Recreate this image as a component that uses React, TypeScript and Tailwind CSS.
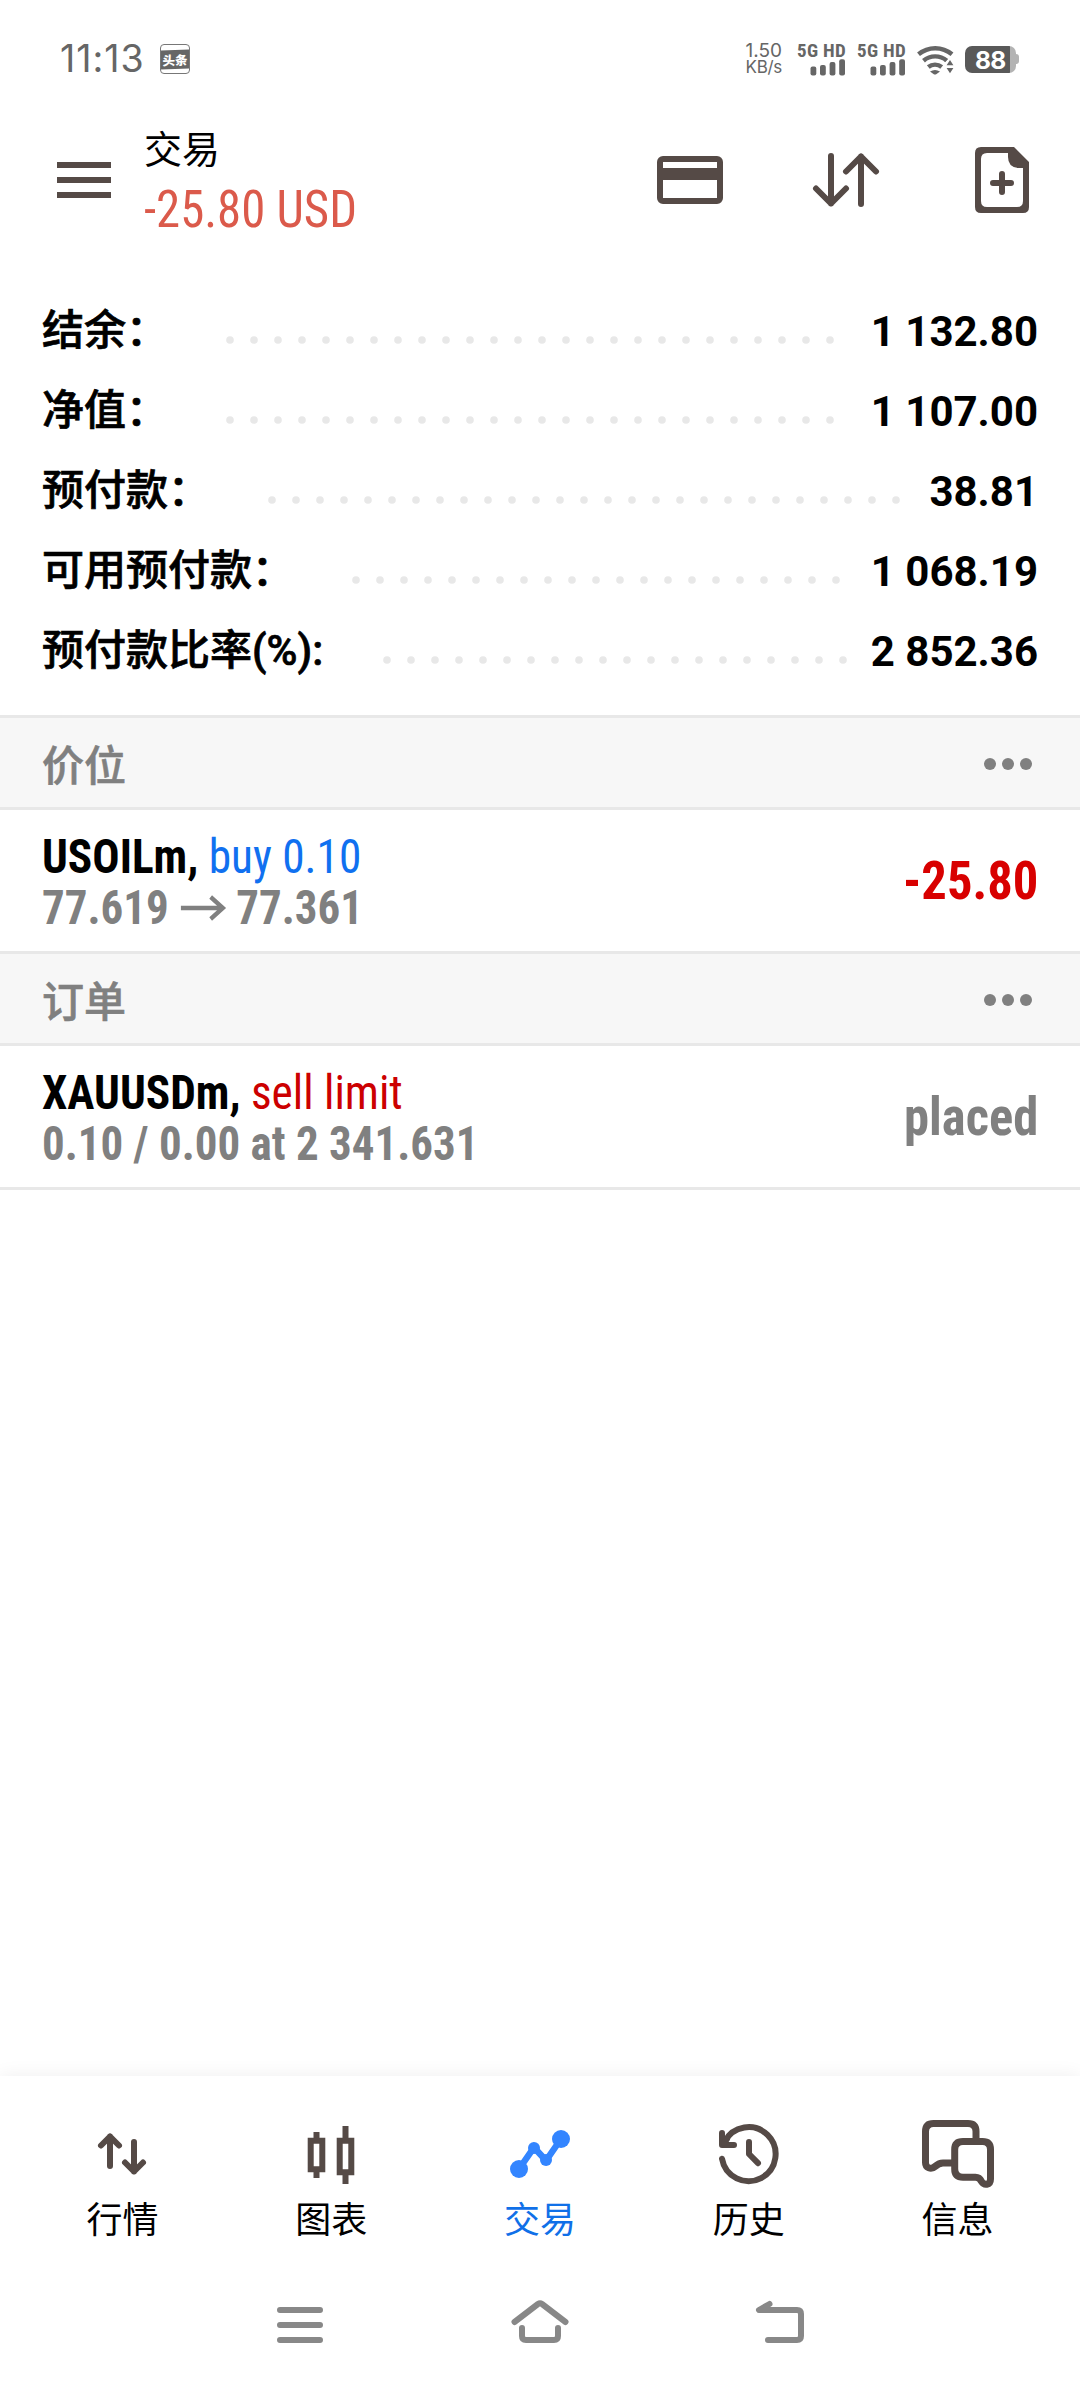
import type { ReactNode } from "react";

const BROWN = "#554a46";
const GRAY = "#666666";

type Account = { label: string; value: string; dots: number; gap: string };

const account: Account[] = [
  { label: "结余：", value: "1 132.80", dots: 26, gap: "ml-[58px]" },
  { label: "净值：", value: "1 107.00", dots: 26, gap: "ml-[58px]" },
  { label: "预付款：", value: "38.81", dots: 27, gap: "ml-[58px]" },
  { label: "可用预付款：", value: "1 068.19", dots: 21, gap: "ml-[58px]" },
  { label: "预付款比率(%):", value: "2 852.36", dots: 20, gap: "ml-[60px]" },
];

function Leader({ count }: { count: number }) {
  const width = (count - 1) * 24 + 8;
  return (
    <svg width={width} height={8} className="mt-[16px] shrink-0" fill="#e8e8e8">
      {Array.from({ length: count }, (_, i) => (
        <circle key={i} cx={4 + i * 24} cy={4} r={3.8} />
      ))}
    </svg>
  );
}

function Signal() {
  return (
    <div className="flex w-[50px] flex-col items-end">
      <span className="w-[50px] whitespace-nowrap font-[Roboto] text-[19px] leading-[16px] font-bold tracking-[0.3px] [font-stretch:75%]">5G HD</span>
      <svg width="36" height="17" viewBox="0 0 36 17" fill={GRAY} className="mr-[1px]">
        <rect x="0.5" y="7.5" width="5.8" height="9" rx="2" />
        <rect x="10" y="6" width="5.8" height="10.5" rx="2" />
        <rect x="19.6" y="3" width="5.8" height="13.5" rx="2" />
        <rect x="29.2" y="0.3" width="5.8" height="16.2" rx="2" />
      </svg>
    </div>
  );
}

function StatusBar() {
  return (
    <div className="flex h-[90px] items-center pt-[28px] pl-[60px] text-[#666666]">
      <span className="w-[86px] whitespace-nowrap font-[Inter] text-[37.5px] leading-[40px] tracking-[1px]">11:13</span>
      <div className="ml-[14px] flex h-[30px] w-[30px] flex-col justify-center overflow-hidden rounded-[4px] border border-[#777777]">
        <div className="-mx-[1px] flex h-[19px] -skew-y-2 items-center justify-center whitespace-nowrap bg-[#666666] font-['Noto_Sans_CJK_SC'] text-[12.5px] leading-[19px] font-black text-white">
          头条
        </div>
      </div>
      <div className="ml-[553px] flex w-[39px] flex-col items-end whitespace-nowrap font-[Inter]">
        <span className="text-[19px] leading-[17px]">1.50</span>
        <span className="text-[17px] leading-[17px] tracking-[-0.3px]">KB/s</span>
      </div>
      <div className="ml-[15px] flex gap-[10px]">
        <Signal />
        <Signal />
      </div>
      <svg width="40" height="32" viewBox="916 43 40 32" fill="none" stroke={GRAY} strokeWidth="4.4" className="ml-[8px]">
        <path d="M919.5 54.3 A26 26 0 0 1 953 54.3" />
        <path d="M924.5 60.700 A18 18 0 0 1 947.8 60.700" />
        <path d="M929.3 67 A10.5 10.5 0 0 1 942.7 67" />
        <path d="M931 71.500 Q936 68.400 941 71.500 L937.2 74.200 Q936 75 934.8 74.200 Z" fill={GRAY} stroke="none" />
        <path d="M951 57.5 L957 64 V75 H944.5 V64 Z" fill="#ffffff" stroke="none" />
        <path d="M951 60 L954.4 65.2 H947.6 Z M951 73.2 L954.4 68 H947.6 Z" fill={GRAY} stroke="none" />
      </svg>
      <div className="ml-[10px] flex items-center">
        <div className="h-[27px] w-[51px] rounded-[7px] bg-linear-to-r from-[#595959] from-[88%] to-[#b3b3b3] to-[88%] pl-[10px] font-[Inter] text-[24.5px] leading-[28px] font-bold tracking-[-0.8px] text-white">
          88
        </div>
        <div className="h-[10px] w-[3px] rounded-r-[3px] bg-[#b3b3b3]" />
      </div>
    </div>
  );
}

function Header() {
  return (
    <header className="flex h-[180px] items-center pl-[57px]">
      <div className="flex w-[54px] flex-col gap-[9px]">
        <div className="h-[6px] bg-[#554a46]" />
        <div className="h-[6px] bg-[#554a46]" />
        <div className="h-[6px] bg-[#554a46]" />
      </div>
      <div className="ml-[33px] flex w-[301px] flex-col items-start whitespace-nowrap pt-[6px]">
        <span className="text-[38px] leading-[54px] text-black">交易</span>
        <span className="origin-left scale-x-[.938] text-[52px] leading-[66px] text-[#db5a4b] [font-stretch:75%]">-25.80 USD</span>
      </div>
      <svg width="66" height="48" viewBox="0 0 66 48" className="ml-[212px]">
        <rect x="3" y="3" width="60" height="42" rx="3" fill="none" stroke={BROWN} strokeWidth="6" />
        <rect x="3" y="12" width="60" height="12" fill={BROWN} />
      </svg>
      <svg width="68" height="60" viewBox="812 150 68 60" fill="none" stroke={BROWN} strokeWidth="6" strokeLinecap="round" strokeLinejoin="round" className="ml-[89px]">
        <path d="M831 156 V203.5 M816 188.5 L831 203.5 L846 188.5" />
        <path d="M861 204 V156.5 M846 171.5 L861 156.5 L876 171.5" />
      </svg>
      <svg width="54" height="66" viewBox="0 0 54 66" className="ml-[95px]">
        <path fillRule="evenodd" fill={BROWN} d="M6 0 H39 L54 15 V60 Q54 66 48 66 H6 Q0 66 0 60 V6 Q0 0 6 0 Z M12 6 Q6 6 6 12 V54 Q6 60 12 60 H42 Q48 60 48 54 V21 H43 Q33 20 33 10 V6 Z" />
        <path d="M27 27 V45 M18 36 H36" stroke={BROWN} strokeWidth="6" strokeLinecap="round" />
      </svg>
    </header>
  );
}

function Section({ title, children }: { title: string; children: ReactNode }) {
  return (
    <section>
      <div className="flex h-[95px] items-center justify-between border-y-[3px] border-[#e8e8e8] bg-[#f7f7f7] pr-[48px] pl-[42px]">
        <h2 className="pt-[9px] text-[42px] leading-[50px] font-medium text-[#808080] [-webkit-text-stroke:0.6px]">{title}</h2>
        <div className="flex gap-[6px] pt-[3px]">
          <i className="h-[12px] w-[12px] rounded-full bg-[#808080]" />
          <i className="h-[12px] w-[12px] rounded-full bg-[#808080]" />
          <i className="h-[12px] w-[12px] rounded-full bg-[#808080]" />
        </div>
      </div>
      {children}
    </section>
  );
}

function Entry(props: { symbol: string; action: ReactNode; detail: ReactNode; result: ReactNode }) {
  return (
    <div className="flex h-[141px] justify-between pr-[42px] pl-[42px] whitespace-nowrap [font-stretch:75%]">
      <div className="flex flex-col items-start pt-[21px] text-[48px] leading-[51px]">
        <div className="origin-left scale-x-[.944]">
          <span className="font-bold text-black">{props.symbol},</span> {props.action}
        </div>
        <div className="flex origin-left scale-x-[.937] items-center font-bold text-[#808080]">{props.detail}</div>
      </div>
      <div className="origin-right scale-x-[.937] text-[54px] leading-[142px] font-bold">{props.result}</div>
    </div>
  );
}

function Tab({ label, active, children }: { label: string; active?: boolean; children: ReactNode }) {
  return (
    <div className="flex flex-col items-center">
      {children}
      <span className={active ? "text-[36px] leading-[54px] text-[#1070e8]" : "text-[36px] leading-[54px] text-black"}>{label}</span>
    </div>
  );
}

function TabBar() {
  return (
    <nav className="grid h-[174px] grid-cols-5 bg-white px-[18px] pt-[38px] shadow-[0_0_18px_rgba(0,0,0,0.07)]">
      <Tab label="行情">
        <svg width="80" height="80" viewBox="82 2114 80 80" fill="none" stroke={BROWN} strokeWidth="6" strokeLinecap="round" strokeLinejoin="round">
          <path d="M110 2166 V2136.5 M101 2145.5 L110 2136.5 L119 2145.5" />
          <path d="M134 2142 V2171.5 M125 2162.5 L134 2171.5 L143 2162.5" />
        </svg>
      </Tab>
      <Tab label="图表">
        <svg width="80" height="80" viewBox="291 2114 80 80" fill="none" stroke={BROWN} strokeWidth="6">
          <path d="M316.5 2132 V2141 M316.5 2169 V2178 M310.7 2140.8 H322.3 V2169.2 H310.7 Z" />
          <path d="M345.5 2126 V2141 M345.5 2172 V2184 M339.7 2140.8 H351.3 V2172.2 H339.7 Z" />
        </svg>
      </Tab>
      <Tab label="交易" active>
        <svg width="80" height="80" viewBox="500 2114 80 80" fill="#3385ff">
          <path d="M519 2169 L534 2147.5 L546 2160.5 L561 2139" fill="none" stroke="#3385ff" strokeWidth="6.5" />
          <circle cx="519" cy="2169" r="9" />
          <circle cx="534" cy="2148" r="6" />
          <circle cx="546" cy="2160" r="6" />
          <circle cx="561" cy="2139" r="9" />
        </svg>
      </Tab>
      <Tab label="历史">
        <svg width="80" height="80" viewBox="709 2114 80 80" fill="none" stroke={BROWN} strokeWidth="6" strokeLinecap="round" strokeLinejoin="round">
          <path d="M722 2158.8 A27 27 0 1 0 724.5 2142" />
          <path d="M722 2133 V2145 H734" />
          <path d="M724 2143 L727 2139" />
          <path d="M749 2142 V2154 L758 2163.2" />
        </svg>
      </Tab>
      <Tab label="信息">
        <svg width="80" height="80" viewBox="918 2114 80 80" fill="none" stroke={BROWN} strokeWidth="7">
          <path d="M976 2140 V2131.500 Q976 2123.500 968 2123.500 H933.500 Q925.500 2123.500 925.500 2131.500 V2162.500 C925.500 2168 931 2170 935 2166.500 Q939 2163 943 2163 H953" />
          <path d="M963 2141.500 H982.500 Q990.500 2141.500 990.500 2149.500 V2179 C990.500 2185.500 984 2185.500 981.500 2181.500 Q979.500 2177.200 975.500 2177.200 H963 Q954.700 2177.200 954.700 2169 V2149.500 Q954.700 2141.500 963 2141.500 Z" />
        </svg>
      </Tab>
    </nav>
  );
}

function SystemBar() {
  return (
    <div className="flex h-[138px] items-center justify-center gap-[180px] bg-white pt-[12px]">
      <svg width="60" height="60" viewBox="270 2295 60 60" stroke="#888888" strokeWidth="6" strokeLinecap="round">
        <path d="M280 2310 H320 M280 2325 H320 M280 2340 H320" />
      </svg>
      <svg width="60" height="60" viewBox="510 2295 60 60" fill="none" stroke="#888888" strokeWidth="6" strokeLinecap="round" strokeLinejoin="round">
        <path d="M514.500 2322 L538 2304 Q540 2302.600 542 2304 L565.500 2322" />
        <path d="M522 2328 V2336 Q522 2340 526 2340 H554 Q558 2340 558 2336 V2328" />
      </svg>
      <svg width="60" height="60" viewBox="750 2295 60 60" fill="none" stroke="#888888" strokeWidth="6" strokeLinecap="round" strokeLinejoin="round">
        <path d="M769.500 2304 L759 2310 H797 Q801 2310 801 2314 V2336 Q801 2340 797 2340 H768" />
      </svg>
    </div>
  );
}

export default function App() {
  return (
    <div className="flex h-[2388px] w-[1080px] flex-col overflow-hidden bg-white font-[Roboto,'Noto_Sans_CJK_SC',sans-serif]">
      <StatusBar />
      <Header />
      <main className="flex-1">
        <div className="pt-[22px] pr-[42px] pb-[23px] pl-[42px]">
          {account.map((row) => (
            <div key={row.label} className="flex h-[80px] items-center whitespace-nowrap text-[42px] leading-[80px] text-black">
              <span className="pb-[2px] font-medium [-webkit-text-stroke:0.7px]">{row.label}</span>
              <div className={`${row.gap} flex flex-1`}>
                <Leader count={row.dots} />
              </div>
              <span className="font-bold">{row.value}</span>
            </div>
          ))}
        </div>
        <Section title="价位">
          <Entry
            symbol="USOILm"
            action={<span className="text-[#1070f0]">buy 0.10</span>}
            detail={
              <>
                <span>77.619</span>
                <svg width="50" height="26" viewBox="0 0 50 26" fill="none" stroke="#808080" strokeWidth="4.500" className="mr-[9px] ml-[13px]">
                  <path d="M0 13 H46 M32 2 L45 13 L32 24" />
                </svg>
                <span>77.361</span>
              </>
            }
            result={<span className="text-[#d80000]">-25.80</span>}
          />
        </Section>
        <Section title="订单">
          <Entry
            symbol="XAUUSDm"
            action={<span className="text-[#cc0000]">sell limit</span>}
            detail="0.10 / 0.00 at 2 341.631"
            result={<span className="text-[#808080]">placed</span>}
          />
        </Section>
        <div className="h-[3px] bg-[#e8e8e8]" />
      </main>
      <TabBar />
      <SystemBar />
    </div>
  );
}
